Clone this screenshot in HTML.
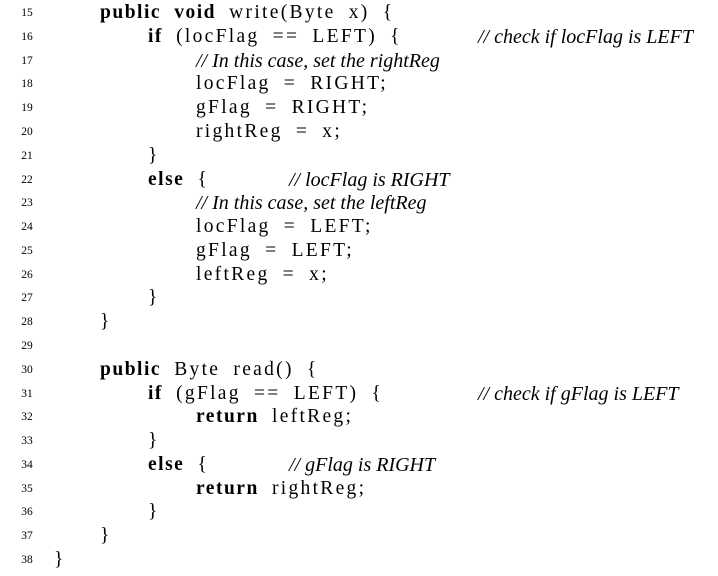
<!DOCTYPE html>
<html><head><meta charset="utf-8"><style>
body{margin:0;width:718px;height:576px;background:#fff;position:relative;overflow:hidden;font-family:"Liberation Serif",serif;color:#000}
.l{position:absolute;left:0;height:24px;line-height:24px;white-space:pre;font-size:19.5px}
.n{position:absolute;left:14px;width:26px;text-align:center;font-size:11.5px}
.c{position:absolute;letter-spacing:2.3px;word-spacing:6px}
.b{font-weight:bold;letter-spacing:1.5px}
.cm{position:absolute;font-style:italic;font-size:20px}
</style></head><body>
<div class="l" style="top:1px"><span class="n">15</span><span class="c" style="left:100px"><span class="b">public</span> <span class="b">void</span> write(Byte x) {</span></div>
<div class="l" style="top:25px"><span class="n">16</span><span class="c" style="left:148px"><span class="b">if</span> (locFlag == LEFT) {</span><span class="cm" style="left:478px">// check if locFlag is LEFT</span></div>
<div class="l" style="top:49px"><span class="n">17</span><span class="cm" style="left:196px">// In this case, set the rightReg</span></div>
<div class="l" style="top:72px"><span class="n">18</span><span class="c" style="left:196px">locFlag = RIGHT;</span></div>
<div class="l" style="top:96px"><span class="n">19</span><span class="c" style="left:196px">gFlag = RIGHT;</span></div>
<div class="l" style="top:120px"><span class="n">20</span><span class="c" style="left:196px">rightReg = x;</span></div>
<div class="l" style="top:144px"><span class="n">21</span><span class="c" style="left:148px">}</span></div>
<div class="l" style="top:168px"><span class="n">22</span><span class="c" style="left:148px"><span class="b">else</span> {</span><span class="cm" style="left:289px">// locFlag is RIGHT</span></div>
<div class="l" style="top:191px"><span class="n">23</span><span class="cm" style="left:196px">// In this case, set the leftReg</span></div>
<div class="l" style="top:215px"><span class="n">24</span><span class="c" style="left:196px">locFlag = LEFT;</span></div>
<div class="l" style="top:239px"><span class="n">25</span><span class="c" style="left:196px">gFlag = LEFT;</span></div>
<div class="l" style="top:263px"><span class="n">26</span><span class="c" style="left:196px">leftReg = x;</span></div>
<div class="l" style="top:286px"><span class="n">27</span><span class="c" style="left:148px">}</span></div>
<div class="l" style="top:310px"><span class="n">28</span><span class="c" style="left:100px">}</span></div>
<div class="l" style="top:334px"><span class="n">29</span></div>
<div class="l" style="top:358px"><span class="n">30</span><span class="c" style="left:100px"><span class="b">public</span> Byte read() {</span></div>
<div class="l" style="top:382px"><span class="n">31</span><span class="c" style="left:148px"><span class="b">if</span> (gFlag == LEFT) {</span><span class="cm" style="left:478px">// check if gFlag is LEFT</span></div>
<div class="l" style="top:405px"><span class="n">32</span><span class="c" style="left:196px"><span class="b">return</span> leftReg;</span></div>
<div class="l" style="top:429px"><span class="n">33</span><span class="c" style="left:148px">}</span></div>
<div class="l" style="top:453px"><span class="n">34</span><span class="c" style="left:148px"><span class="b">else</span> {</span><span class="cm" style="left:289px">// gFlag is RIGHT</span></div>
<div class="l" style="top:477px"><span class="n">35</span><span class="c" style="left:196px"><span class="b">return</span> rightReg;</span></div>
<div class="l" style="top:500px"><span class="n">36</span><span class="c" style="left:148px">}</span></div>
<div class="l" style="top:524px"><span class="n">37</span><span class="c" style="left:100px">}</span></div>
<div class="l" style="top:548px"><span class="n">38</span><span class="c" style="left:54px">}</span></div>
</body></html>
